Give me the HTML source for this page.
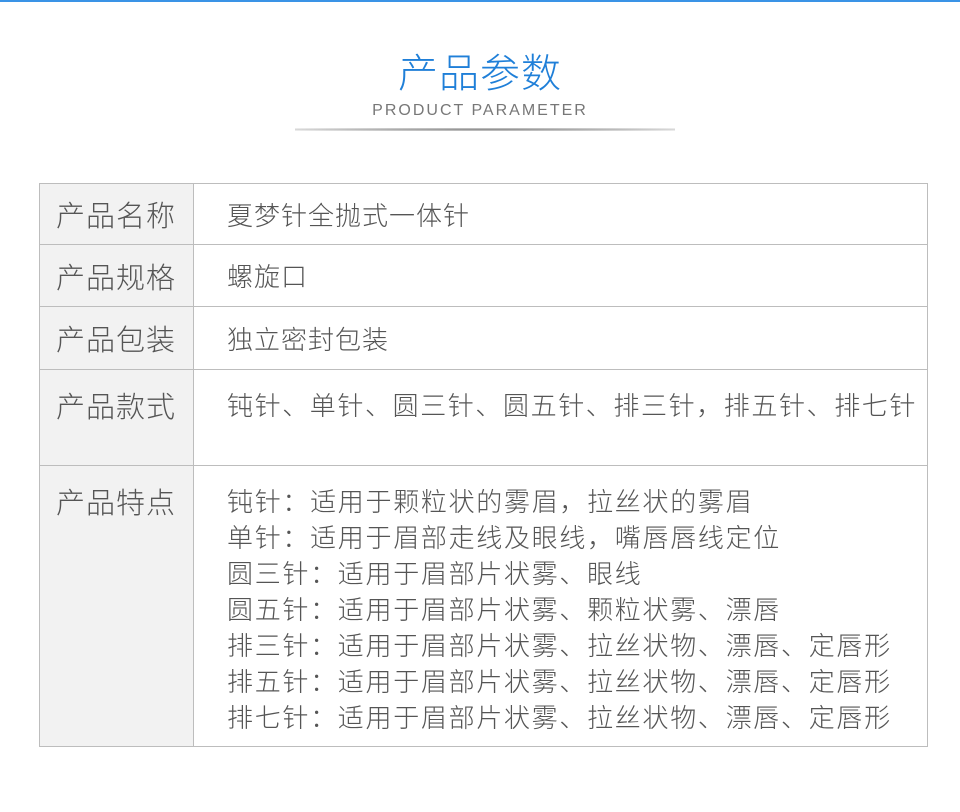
<!DOCTYPE html>
<html><head><meta charset="utf-8"><style>
body{margin:0;width:960px;height:812px;background:#fff;position:relative;overflow:hidden;font-family:"Liberation Sans","Noto Sans CJK SC",sans-serif;}
.top{position:absolute;left:0;top:0;width:960px;height:2px;background:#3a93e6;}
.title{position:absolute;left:0;width:960px;top:46px;text-align:center;font-size:40px;color:#1f7fd8;line-height:56px;font-weight:300;letter-spacing:1px;}
.sub{position:absolute;left:0;width:960px;top:101px;text-align:center;font-size:16px;color:#777;letter-spacing:2px;line-height:20px;}
.bar{position:absolute;left:295px;width:380px;top:128px;height:3px;background:radial-gradient(ellipse at center,#888 0%,#bbb 50%,rgba(255,255,255,0) 100%);}
table{position:absolute;left:39px;top:183px;width:889px;border-collapse:collapse;}
td{border:1px solid #bdbdbd;color:#555;font-size:26px;vertical-align:top;padding:0;font-weight:300;}
td.l{background:#f2f2f2;width:154px;padding-left:16px;box-sizing:border-box;font-size:29px;letter-spacing:1px;white-space:nowrap;}
td.v{padding-left:33px;letter-spacing:1px;}
</style></head><body>
<div class="top"></div>
<div class="title">产品参数</div>
<div class="sub">PRODUCT PARAMETER</div>
<div class="bar"></div>
<table>
<tr style="height:61px"><td class="l" style="vertical-align:middle">产品名称</td><td class="v" style="vertical-align:middle">夏梦针全抛式一体针</td></tr>
<tr style="height:62px"><td class="l" style="vertical-align:middle">产品规格</td><td class="v" style="vertical-align:middle">螺旋口</td></tr>
<tr style="height:63px"><td class="l" style="vertical-align:middle">产品包装</td><td class="v" style="vertical-align:middle">独立密封包装</td></tr>
<tr style="height:96px"><td class="l" style="padding-top:14px">产品款式</td><td class="v" style="padding-top:16px;letter-spacing:1.6px;white-space:nowrap">钝针、单针、圆三针、圆五针、排三针，排五针、排七针</td></tr>
<tr style="height:281px"><td class="l" style="padding-top:14px">产品特点</td><td class="v" style="padding-top:18px;line-height:36px;letter-spacing:1.7px;white-space:nowrap">钝针：适用于颗粒状的雾眉，拉丝状的雾眉<br>单针：适用于眉部走线及眼线，嘴唇唇线定位<br>圆三针：适用于眉部片状雾、眼线<br>圆五针：适用于眉部片状雾、颗粒状雾、漂唇<br>排三针：适用于眉部片状雾、拉丝状物、漂唇、定唇形<br>排五针：适用于眉部片状雾、拉丝状物、漂唇、定唇形<br>排七针：适用于眉部片状雾、拉丝状物、漂唇、定唇形</td></tr>
</table>
</body></html>
